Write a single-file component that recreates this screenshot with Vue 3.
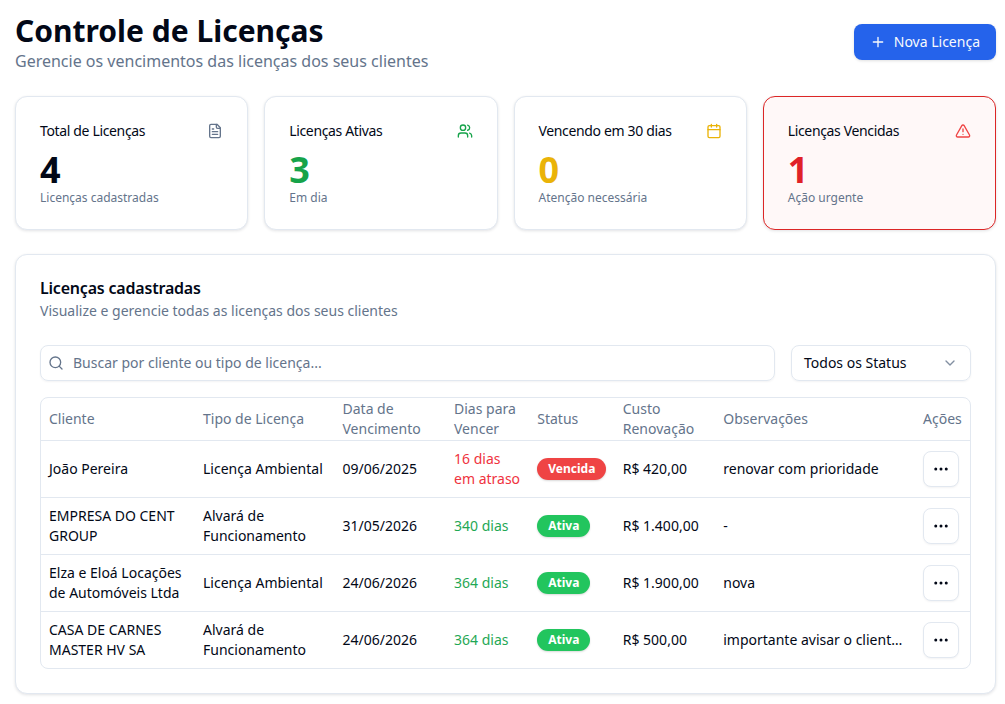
<script setup>
import { computed, ref } from 'vue'

const stats = [
  { title: 'Total de Licenças', value: 4, note: 'Licenças cadastradas', tone: 'total', icon: 'file' },
  { title: 'Licenças Ativas', value: 3, note: 'Em dia', tone: 'active', icon: 'users' },
  { title: 'Vencendo em 30 dias', value: 0, note: 'Atenção necessária', tone: 'soon', icon: 'calendar' },
  { title: 'Licenças Vencidas', value: 1, note: 'Ação urgente', tone: 'late', icon: 'alert' }
]

const licenses = [
  { client: 'João Pereira', type: 'Licença Ambiental', due: '09/06/2025', days: '16 dias em atraso', status: 'Vencida', cost: 'R$ 420,00', notes: 'renovar com prioridade' },
  { client: 'EMPRESA DO CENT GROUP', type: 'Alvará de Funcionamento', due: '31/05/2026', days: '340 dias', status: 'Ativa', cost: 'R$ 1.400,00', notes: '-' },
  { client: 'Elza e Eloá Locações de Automóveis Ltda', type: 'Licença Ambiental', due: '24/06/2026', days: '364 dias', status: 'Ativa', cost: 'R$ 1.900,00', notes: 'nova' },
  { client: 'CASA DE CARNES MASTER HV SA', type: 'Alvará de Funcionamento', due: '24/06/2026', days: '364 dias', status: 'Ativa', cost: 'R$ 500,00', notes: 'importante avisar o cliente antes do vencimento' }
]

const search = ref('')
const visible = computed(() => {
  const q = search.value.trim().toLowerCase()
  return licenses.filter((l) => !q || l.client.toLowerCase().includes(q) || l.type.toLowerCase().includes(q))
})
</script>

<template>
  <div class="page">
    <header class="top">
      <div>
        <h1>Controle de Licenças</h1>
        <p>Gerencie os vencimentos das licenças dos seus clientes</p>
      </div>
      <button class="new-btn">
        <svg viewBox="0 0 24 24" class="ico"><path d="M5 12h14M12 5v14" /></svg>
        <span>Nova Licença</span>
      </button>
    </header>

    <section class="stats">
      <div v-for="s in stats" :key="s.title" class="card stat" :class="s.tone">
        <div class="stat-head">
          <span>{{ s.title }}</span>
          <svg viewBox="0 0 24 24" class="ico stat-ico">
            <template v-if="s.icon === 'file'">
              <path d="M15 2H6a2 2 0 0 0-2 2v16a2 2 0 0 0 2 2h12a2 2 0 0 0 2-2V7z" />
              <path d="M14 2v4a2 2 0 0 0 2 2h4M10 9H8M16 13H8M16 17H8" />
            </template>
            <template v-else-if="s.icon === 'users'">
              <path d="M16 21v-2a4 4 0 0 0-4-4H6a4 4 0 0 0-4 4v2" />
              <circle cx="9" cy="7" r="4" />
              <path d="M22 21v-2a4 4 0 0 0-3-3.87M16 3.13a4 4 0 0 1 0 7.75" />
            </template>
            <template v-else-if="s.icon === 'calendar'">
              <path d="M8 2v4M16 2v4" />
              <rect x="3" y="4" width="18" height="18" rx="2" />
              <path d="M3 10h18" />
            </template>
            <template v-else>
              <path d="m21.73 18-8-14a2 2 0 0 0-3.48 0l-8 14A2 2 0 0 0 4 21h16a2 2 0 0 0 1.73-3" />
              <path d="M12 9v4M12 17h.01" />
            </template>
          </svg>
        </div>
        <div class="stat-value">{{ s.value }}</div>
        <div class="stat-note">{{ s.note }}</div>
      </div>
    </section>

    <section class="card panel">
      <h2>Licenças cadastradas</h2>
      <p class="panel-sub">Visualize e gerencie todas as licenças dos seus clientes</p>

      <div class="filters">
        <label class="search">
          <svg viewBox="0 0 24 24" class="ico"><circle cx="11" cy="11" r="8" /><path d="m21 21-4.3-4.3" /></svg>
          <input v-model="search" type="text" placeholder="Buscar por cliente ou tipo de licença..." />
        </label>
        <div class="select">
          <span>Todos os Status</span>
          <svg viewBox="0 0 24 24" class="ico"><path d="m6 9 6 6 6-6" /></svg>
        </div>
      </div>

      <div class="table-wrap">
        <table>
          <colgroup>
            <col style="width: 154px" />
            <col style="width: 139.5px" />
            <col style="width: 111.5px" />
            <col style="width: 83.25px" />
            <col style="width: 85.5px" />
            <col style="width: 100.5px" />
            <col style="width: 199.75px" />
            <col style="width: 55px" />
          </colgroup>
          <thead>
            <tr>
              <th>Cliente</th>
              <th>Tipo de Licença</th>
              <th>Data de Vencimento</th>
              <th>Dias para Vencer</th>
              <th>Status</th>
              <th>Custo Renovação</th>
              <th>Observações</th>
              <th>Ações</th>
            </tr>
          </thead>
          <tbody>
            <tr v-for="l in visible" :key="l.client">
              <td>{{ l.client }}</td>
              <td>{{ l.type }}</td>
              <td>{{ l.due }}</td>
              <td :class="l.status === 'Vencida' ? 'days-late' : 'days-ok'">{{ l.days }}</td>
              <td><span class="badge" :class="l.status === 'Vencida' ? 'badge-late' : 'badge-ok'">{{ l.status }}</span></td>
              <td>{{ l.cost }}</td>
              <td><div class="notes">{{ l.notes }}</div></td>
              <td>
                <button class="more" aria-label="Ações">
                  <svg viewBox="0 0 24 24" class="ico"><circle cx="12" cy="12" r="1" /><circle cx="19" cy="12" r="1" /><circle cx="5" cy="12" r="1" /></svg>
                </button>
              </td>
            </tr>
          </tbody>
        </table>
      </div>
    </section>
  </div>
</template>

<style scoped>
.page {
  box-sizing: border-box;
  padding: 12px 9px 16px 15px;
  font-family: "Noto Sans", sans-serif;
  color: #020817;
  background: #fff;
  font-size: 14px;
}

.ico {
  width: 16px;
  height: 16px;
  fill: none;
  stroke: currentColor;
  stroke-width: 2;
  stroke-linecap: round;
  stroke-linejoin: round;
  flex: none;
}

/* header */
.top {
  display: flex;
  justify-content: space-between;
  align-items: center;
  margin-bottom: 24px;
}

h1 {
  margin: 1px 0 0;
  font-size: 30px;
  line-height: 36px;
  font-weight: 700;
}

.top p {
  margin: 0 0 -1px;
  font-size: 16px;
  line-height: 24px;
  color: #64748b;
}

.new-btn {
  display: flex;
  align-items: center;
  gap: 8px;
  height: 36px;
  padding: 0 16px;
  border: 0;
  border-radius: 8px;
  background: #2563eb;
  color: #f8fafc;
  font: 400 14px/20px "Noto Sans", sans-serif;
  box-shadow: 0 1px 3px rgba(0, 0, 0, 0.12);
}

/* stat cards */
.card {
  background: #fff;
  border: 1px solid #e2e8f0;
  border-radius: 12px;
  box-shadow: 0 1px 3px rgba(15, 23, 42, 0.12);
  box-sizing: border-box;
}

.stats {
  display: grid;
  grid-template-columns: repeat(4, 1fr);
  gap: 16px;
  margin-bottom: 24px;
}

.stat {
  height: 134px;
  padding: 24px;
}

.stat-head {
  display: flex;
  justify-content: space-between;
  align-items: center;
  line-height: 20px;
  letter-spacing: -0.35px;
}

.stat-value {
  font-size: 36px;
  line-height: 40px;
  font-weight: 700;
  margin-top: 9px;
}

.stat-note {
  font-size: 12px;
  line-height: 16px;
  color: #64748b;
}

.total .stat-ico { color: #64748b; }
.active .stat-ico, .active .stat-value { color: #16a34a; }
.soon .stat-ico, .soon .stat-value { color: #eab308; }
.late .stat-value { color: #e02128; }
.late .stat-ico { color: #ef4444; }

.late {
  border-color: #dc2626;
  background: #fff8f8;
}

/* panel */
.panel {
  padding: 24px;
}

h2 {
  margin: 0;
  font-size: 16px;
  line-height: 18px;
  font-weight: 600;
  letter-spacing: -0.2px;
}

.panel-sub {
  margin: 4px 0 0;
  line-height: 20px;
  color: #64748b;
}

.filters {
  display: flex;
  gap: 16px;
  margin-top: 24px;
  margin-bottom: 16px;
}

.search {
  flex: 1;
  display: flex;
  align-items: center;
  gap: 9px;
  height: 36px;
  box-sizing: border-box;
  padding: 0 7px;
  border: 1px solid #e2e8f0;
  border-radius: 8px;
  color: #64748b;
  box-shadow: 0 1px 2px rgba(15, 23, 42, 0.05);
}

.search input {
  flex: 1;
  height: 20px;
  border: 0;
  outline: 0;
  padding: 0;
  background: transparent;
  font: 14px/20px "Noto Sans", sans-serif;
  color: #020817;
}

.search input::placeholder {
  color: #64748b;
}

.select {
  width: 180px;
  height: 36px;
  box-sizing: border-box;
  display: flex;
  justify-content: space-between;
  align-items: center;
  padding: 0 12px;
  border: 1px solid #e2e8f0;
  border-radius: 8px;
  box-shadow: 0 1px 2px rgba(15, 23, 42, 0.05);
}

.select span {
  line-height: 20px;
}

.select .ico {
  color: #64748b;
  opacity: 0.8;
}

/* table */
.table-wrap {
  border: 1px solid #e2e8f0;
  border-radius: 8px;
  overflow: hidden;
}

table {
  width: 100%;
  table-layout: fixed;
  border-collapse: collapse;
}

th {
  height: 42px;
  padding: 0 8px;
  text-align: left;
  font-weight: 400;
  line-height: 20px;
  color: #64748b;
  border-bottom: 1px solid #e2e8f0;
}

td {
  height: 56px;
  padding: 8px;
  line-height: 20px;
  box-sizing: border-box;
  border-bottom: 1px solid #e2e8f0;
}

tbody tr:last-child td {
  border-bottom: 0;
}

.days-late { color: #ef3340; }
.days-ok { color: #1fa855; }

.notes {
  white-space: nowrap;
  overflow: hidden;
  text-overflow: ellipsis;
  max-width: 180px;
}

.badge {
  display: inline-block;
  padding: 1px 11px;
  border-radius: 999px;
  font-size: 12px;
  line-height: 20px;
  font-weight: 700;
  color: #fff;
  box-shadow: 0 1px 2px rgba(0, 0, 0, 0.15);
}

.badge-late { background: #ef4444; }
.badge-ok { background: #22c55e; }

.more {
  display: flex;
  align-items: center;
  justify-content: center;
  width: 36px;
  height: 36px;
  padding: 0;
  background: #fff;
  border: 1px solid #e2e8f0;
  border-radius: 8px;
  color: #020817;
  box-shadow: 0 1px 2px rgba(15, 23, 42, 0.05);
}

.more .ico {
  width: 18px;
  height: 18px;
}
</style>
